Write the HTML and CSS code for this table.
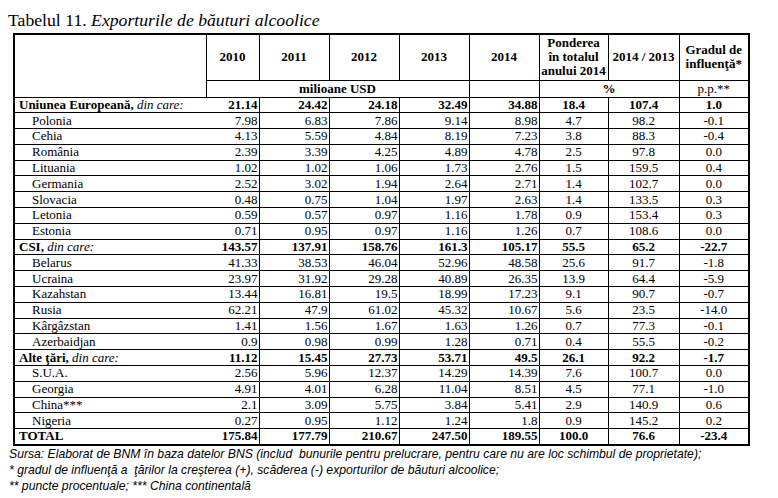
FILE: index.html
```html
<!DOCTYPE html>
<html lang="ro">
<head>
  <meta charset="UTF-8">
  <title>Tabelul 11. Exporturile de băuturi alcoolice</title>
  <link rel="stylesheet" href="styles.css">
</head>
<body>
  <div class="page">
    <h1 class="title">Tabelul 11. <em>Exporturile de băuturi alcoolice</em></h1>

    <table class="tbl">
      <colgroup>
        <col class="w-name"><col class="w-10"><col class="w-yr"><col class="w-yr"><col class="w-yr">
        <col class="w-yr"><col class="w-pond"><col class="w-rap"><col class="w-grad">
      </colgroup>
      <thead>
        <tr class="head">
          <th rowspan="2"></th>
          <th>2010</th>
          <th>2011</th>
          <th>2012</th>
          <th>2013</th>
          <th>2014</th>
          <th>Ponderea<br>în totalul<br>anului 2014</th>
          <th>2014 / 2013</th>
          <th>Gradul de<br>influenţă*</th>
        </tr>
        <tr class="units">
          <th colspan="4">milioane USD</th>
          <th></th>
          <th colspan="2">%</th>
          <th class="plain">p.p.**</th>
        </tr>
      </thead>
      <tbody>
        <!-- Uniunea Europeana -->
        <tr class="grp"><td class="name">Uniunea Europeană, <i>din care:</i></td><td class="n first">21.14</td><td class="n">24.42</td><td class="n">24.18</td><td class="n">32.49</td><td class="n">34.88</td><td class="c">18.4</td><td class="c">107.4</td><td class="c">1.0</td></tr>
        <tr><td class="name sub">Polonia</td><td class="n first">7.98</td><td class="n">6.83</td><td class="n">7.86</td><td class="n">9.14</td><td class="n">8.98</td><td class="c">4.7</td><td class="c">98.2</td><td class="c">-0.1</td></tr>
        <tr><td class="name sub">Cehia</td><td class="n first">4.13</td><td class="n">5.59</td><td class="n">4.84</td><td class="n">8.19</td><td class="n">7.23</td><td class="c">3.8</td><td class="c">88.3</td><td class="c">-0.4</td></tr>
        <tr><td class="name sub">România</td><td class="n first">2.39</td><td class="n">3.39</td><td class="n">4.25</td><td class="n">4.89</td><td class="n">4.78</td><td class="c">2.5</td><td class="c">97.8</td><td class="c">0.0</td></tr>
        <tr><td class="name sub">Lituania</td><td class="n first">1.02</td><td class="n">1.02</td><td class="n">1.06</td><td class="n">1.73</td><td class="n">2.76</td><td class="c">1.5</td><td class="c">159.5</td><td class="c">0.4</td></tr>
        <tr><td class="name sub">Germania</td><td class="n first">2.52</td><td class="n">3.02</td><td class="n">1.94</td><td class="n">2.64</td><td class="n">2.71</td><td class="c">1.4</td><td class="c">102.7</td><td class="c">0.0</td></tr>
        <tr><td class="name sub">Slovacia</td><td class="n first">0.48</td><td class="n">0.75</td><td class="n">1.04</td><td class="n">1.97</td><td class="n">2.63</td><td class="c">1.4</td><td class="c">133.5</td><td class="c">0.3</td></tr>
        <tr><td class="name sub">Letonia</td><td class="n first">0.59</td><td class="n">0.57</td><td class="n">0.97</td><td class="n">1.16</td><td class="n">1.78</td><td class="c">0.9</td><td class="c">153.4</td><td class="c">0.3</td></tr>
        <tr><td class="name sub">Estonia</td><td class="n first">0.71</td><td class="n">0.95</td><td class="n">0.97</td><td class="n">1.16</td><td class="n">1.26</td><td class="c">0.7</td><td class="c">108.6</td><td class="c">0.0</td></tr>
        <!-- CSI -->
        <tr class="grp"><td class="name">CSI, <i>din care:</i></td><td class="n first">143.57</td><td class="n">137.91</td><td class="n">158.76</td><td class="n">161.3</td><td class="n">105.17</td><td class="c">55.5</td><td class="c">65.2</td><td class="c">-22.7</td></tr>
        <tr><td class="name sub">Belarus</td><td class="n first">41.33</td><td class="n">38.53</td><td class="n">46.04</td><td class="n">52.96</td><td class="n">48.58</td><td class="c">25.6</td><td class="c">91.7</td><td class="c">-1.8</td></tr>
        <tr><td class="name sub">Ucraina</td><td class="n first">23.97</td><td class="n">31.92</td><td class="n">29.28</td><td class="n">40.89</td><td class="n">26.35</td><td class="c">13.9</td><td class="c">64.4</td><td class="c">-5.9</td></tr>
        <tr><td class="name sub">Kazahstan</td><td class="n first">13.44</td><td class="n">16.81</td><td class="n">19.5</td><td class="n">18.99</td><td class="n">17.23</td><td class="c">9.1</td><td class="c">90.7</td><td class="c">-0.7</td></tr>
        <tr><td class="name sub">Rusia</td><td class="n first">62.21</td><td class="n">47.9</td><td class="n">61.02</td><td class="n">45.32</td><td class="n">10.67</td><td class="c">5.6</td><td class="c">23.5</td><td class="c">-14.0</td></tr>
        <tr><td class="name sub">Kârgâzstan</td><td class="n first">1.41</td><td class="n">1.56</td><td class="n">1.67</td><td class="n">1.63</td><td class="n">1.26</td><td class="c">0.7</td><td class="c">77.3</td><td class="c">-0.1</td></tr>
        <tr><td class="name sub">Azerbaidjan</td><td class="n first">0.9</td><td class="n">0.98</td><td class="n">0.99</td><td class="n">1.28</td><td class="n">0.71</td><td class="c">0.4</td><td class="c">55.5</td><td class="c">-0.2</td></tr>
        <!-- Alte tari -->
        <tr class="grp"><td class="name">Alte ţări, <i>din care:</i></td><td class="n first">11.12</td><td class="n">15.45</td><td class="n">27.73</td><td class="n">53.71</td><td class="n">49.5</td><td class="c">26.1</td><td class="c">92.2</td><td class="c">-1.7</td></tr>
        <tr><td class="name sub">S.U.A.</td><td class="n first">2.56</td><td class="n">5.96</td><td class="n">12.37</td><td class="n">14.29</td><td class="n">14.39</td><td class="c">7.6</td><td class="c">100.7</td><td class="c">0.0</td></tr>
        <tr><td class="name sub">Georgia</td><td class="n first">4.91</td><td class="n">4.01</td><td class="n">6.28</td><td class="n">11.04</td><td class="n">8.51</td><td class="c">4.5</td><td class="c">77.1</td><td class="c">-1.0</td></tr>
        <tr><td class="name sub">China***</td><td class="n first">2.1</td><td class="n">3.09</td><td class="n">5.75</td><td class="n">3.84</td><td class="n">5.41</td><td class="c">2.9</td><td class="c">140.9</td><td class="c">0.6</td></tr>
        <tr><td class="name sub">Nigeria</td><td class="n first">0.27</td><td class="n">0.95</td><td class="n">1.12</td><td class="n">1.24</td><td class="n">1.8</td><td class="c">0.9</td><td class="c">145.2</td><td class="c">0.2</td></tr>
        <!-- Total -->
        <tr class="grp"><td class="name">TOTAL</td><td class="n first">175.84</td><td class="n">177.79</td><td class="n">210.67</td><td class="n">247.50</td><td class="n">189.55</td><td class="c">100.0</td><td class="c">76.6</td><td class="c">-23.4</td></tr>
      </tbody>
    </table>

    <div class="notes">
      <p>Sursa: Elaborat de BNM în baza datelor BNS (includ&nbsp; bunurile pentru prelucrare, pentru care nu are loc schimbul de proprietate);</p>
      <p>* gradul de influenţă a&nbsp; ţărilor la creşterea (+), scăderea (-) exporturilor de băuturi alcoolice;</p>
      <p>** puncte procentuale; *** China continentală</p>
    </div>
  </div>
</body>
</html>
```

FILE: styles.css
```css
/* BAZA */
* {
  margin: 0;
  padding: 0;
  box-sizing: border-box;
}
body {
  background: #fff;
  color: #000;
  font-family: "Liberation Serif", "Times New Roman", serif;
}
.page {
  padding: 10px 0 0 8px;
}

/* TITLU */
.title {
  font-size: 17.7px;
  font-weight: normal;
  line-height: 20px;
  height: 23px;
}
.title em {
  font-style: italic;
}

/* TABEL */
.tbl {
  margin-left: 5px;
  width: 735px;
  table-layout: fixed;
  border-collapse: collapse;
  border: 2px solid #000;
  font-size: 13px;
}
.w-name { width: 192px; }
.w-10 { width: 53px; }
.w-yr { width: 70px; }
.w-pond { width: 69px; }
.w-rap { width: 71px; }
.w-grad { width: 70px; }

.tbl th,
.tbl td {
  border: 1px solid #000;
  padding: 0;
}
.tbl th {
  font-weight: bold;
  text-align: center;
  vertical-align: middle;
  line-height: 14px;
}
.tbl th.plain {
  font-weight: normal;
}
.tbl tr.head {
  height: 46px;
}
.tbl tr.units {
  height: 17px;
}
.tbl tbody tr {
  height: 15.8px;
}
.tbl td {
  line-height: 14px;
  white-space: nowrap;
}

/* coloana cu denumiri nu are linie spre 2010 */
.tbl td.name {
  border-right: none;
  padding-left: 4px;
}
.tbl td.sub {
  padding-left: 17px;
}
.tbl td.first {
  border-left: none;
}
.tbl td.n {
  text-align: right;
  padding-right: 1px;
}
.tbl td.c {
  text-align: center;
}
.tbl tr.grp td {
  font-weight: bold;
}
.tbl tr.grp td i {
  font-weight: normal;
}

/* NOTE */
.notes {
  font-family: "Liberation Sans", Arial, sans-serif;
  font-style: italic;
  font-size: 12.2px;
  line-height: 16px;
  padding-left: 1px;
}
```
